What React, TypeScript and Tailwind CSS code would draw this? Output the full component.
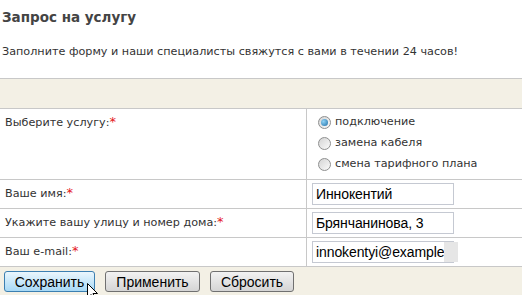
const labelFont = { fontFamily: '"DejaVu Sans", Verdana, sans-serif' }

const rows = [
  { label: 'Ваше имя:', value: 'Иннокентий' },
  { label: 'Укажите вашу улицу и номер дома:', value: 'Брянчанинова, 3' },
  { label: 'Ваш e-mail:', value: 'innokentyi@example' },
]

const Radio = ({ checked, text }: { checked?: boolean; text: string }) => (
  <div className="flex items-center h-[21px]">
    <span className="w-[13px] h-[13px] rounded-full border border-[#8e8f8f] bg-gradient-to-br from-[#d4d4d4] to-[#fbfbfb] flex items-center justify-center mr-[4px]">
      {checked && <span className="w-[7px] h-[7px] rounded-full bg-[radial-gradient(circle_at_35%_35%,#8fd2f5,#1f6fa8)]" />}
    </span>
    <span className="text-[11.2px] text-[#333]">{text}</span>
  </div>
)

const Star = () => <span className="text-[#e4161b] text-[13px] leading-none align-top">*</span>

const Btn = ({ text, active, w }: { text: string; active?: boolean; w: string }) => (
  <button
    className={`${active ? 'border-[#3c7fb1] bg-gradient-to-b from-[#eaf6fd] to-[#a7d9f5]' : 'border-[#707070] bg-gradient-to-b from-[#f2f2f2] to-[#d5d5d5]'} ${w} h-[21px] rounded-[3px] border text-[14px] text-black leading-none`}
    style={{ fontFamily: '"Liberation Sans", Arial, sans-serif' }}
  >
    {text}
  </button>
)

export default function App() {
  return (
    <div className="w-[522px] h-[295px] bg-white overflow-hidden relative" style={labelFont}>
      <h2 className="text-[13.5px] font-bold text-[#444] pl-[2px] pt-[9px] leading-[17px]">Запрос на услугу</h2>
      <p className="text-[11.2px] text-[#333] pl-[2px] mt-[18px] leading-[15px]">
        Заполните форму и наши специалисты свяжутся с вами в течении 24 часов!
      </p>
      <div className="mt-[19px] bg-[#f3f0e5] border-t border-[#c8c8c8]">
        <div className="h-[29px]" />
        <div className="bg-white">
          <div className="grid grid-cols-[307px_1fr] border-t border-[#c8c8c8] h-[71px]">
            <div className="border-r border-[#c8c8c8] pl-[5px] pt-[6px] text-[11.2px] text-[#333]">
              Выберите услугу:<Star />
            </div>
            <div className="pl-[11px] pt-[3px]">
              <Radio checked text="подключение" />
              <Radio text="замена кабеля" />
              <Radio text="смена тарифного плана" />
            </div>
          </div>
          {rows.map((r, i) => (
            <div key={i} className="grid grid-cols-[307px_1fr] border-t border-[#c8c8c8] h-[29px]">
              <div className="border-r border-[#c8c8c8] pl-[5px] flex items-center text-[11.2px] text-[#333]">
                <span>
                  {r.label}
                  <Star />
                </span>
              </div>
              <div className="pl-[5px] flex items-center">
                <div
                  className="w-[142px] h-[22px] border border-[#c5c9d2] bg-white pl-[3px] text-[14px] tracking-[-0.1px] text-black flex items-center whitespace-nowrap"
                  style={{ fontFamily: '"Liberation Sans", Arial, sans-serif' }}
                >
                  <span className="shrink-0">{r.value}</span>
                  {i === 2 && <span className="bg-[#e6e6e6] h-[20px] w-[14px] shrink-0" />}
                </div>
              </div>
            </div>
          ))}
        </div>
        <div className="border-t border-[#c8c8c8] flex gap-[10px] pl-[4px] pt-[4px] h-[30px] relative">
          <Btn text="Сохранить" active w="w-[91px]" />
          <Btn text="Применить" w="w-[95px]" />
          <Btn text="Сбросить" w="w-[84px]" />
          <svg className="absolute left-[87px] top-[16px]" width="12" height="19" viewBox="0 0 12 19">
            <path d="M0.5 0.5 L0.5 15 L4 11.5 L6.5 17.5 L8.5 16.5 L6 10.5 L10.5 10.5 Z" fill="white" stroke="black" strokeWidth="1" />
          </svg>
        </div>
      </div>
    </div>
  )
}
